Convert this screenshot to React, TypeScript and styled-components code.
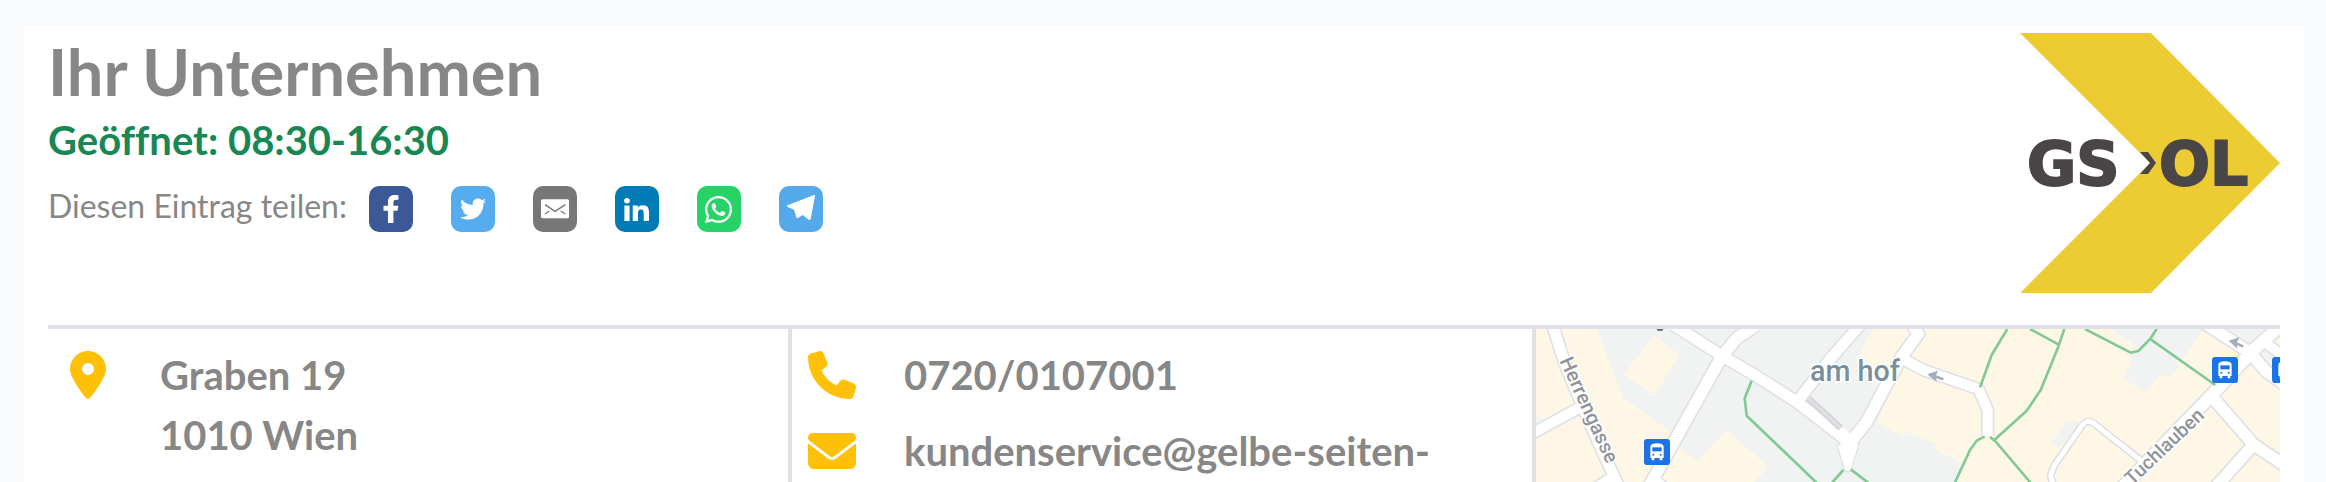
import React from "react";
import styled, { createGlobalStyle } from "styled-components";
import { FaFacebookF, FaTwitter, FaWhatsapp } from "react-icons/fa";
import { FaEnvelope, FaLocationDot, FaPhone } from "react-icons/fa6";

const GlobalStyle = createGlobalStyle`
  *, *::before, *::after { box-sizing: border-box; }
  body {
    margin: 0;
    background: #f8fafc;
    color: #878787;
    font-family: Lato, "Liberation Sans", sans-serif;
    font-variant-ligatures: none;
  }
`;

const Page = styled.div`
  display: flex;
  flex-direction: column;
  min-height: 100vh;
  padding: 25px 22px 0 24px;
`;

const Card = styled.main`
  display: flex;
  flex-direction: column;
  flex: 1;
  padding: 8px 24px 0;
  background: #fff;
`;

const Header = styled.header`
  display: flex;
  justify-content: space-between;
  align-items: flex-start;
  padding-bottom: 32px;
  border-bottom: 4px solid #dee2e6;
`;

const Title = styled.h1`
  margin: 0;
  font-size: 65px;
  line-height: 77px;
  font-weight: 700;
`;

const OpeningHours = styled.p`
  margin: 0;
  color: #198754;
  font-size: 40px;
  line-height: 60px;
  font-weight: 700;
`;

const ShareRow = styled.div`
  display: flex;
  align-items: flex-start;
  gap: 22px;
  margin-top: 12px;
  font-size: 32px;
  line-height: 48px;
`;

const ShareButtons = styled.div`
  display: flex;
  gap: 38px;
  padding-top: 4px;
`;

const ShareButton = styled.button<{ $color: string }>`
  display: flex;
  align-items: center;
  justify-content: center;
  width: 44px;
  height: 46px;
  padding: 0;
  border: 0;
  border-radius: 10px;
  background: ${(p) => p.$color};
  color: #fff;
  cursor: pointer;
`;

const Logo = styled.svg`
  display: block;
  flex: none;
  width: 260px;
  height: 260px;
`;

const Columns = styled.div`
  display: grid;
  grid-template-columns: repeat(3, minmax(0, 1fr));
  flex: 1;
`;

const ContactColumn = styled.section`
  display: flex;
  flex-direction: column;
  gap: 16px;
  padding-top: 16px;
  border-right: 4px solid #dee2e6;
`;

const ContactRow = styled.div`
  display: grid;
  grid-template-columns: 80px minmax(0, 1fr);
  column-gap: 32px;
  font-size: 40px;
  line-height: 60px;
  font-weight: 700;
`;

const IconCell = styled.span`
  display: flex;
  align-items: center;
  justify-content: center;
  height: 60px;
  color: #ffc107;
  font-size: 48px;
`;

const Address = styled.address`
  font-style: normal;
`;

const ContactLink = styled.a`
  color: inherit;
  text-decoration: none;
`;

const MapColumn = styled.section`
  display: flex;
  overflow: hidden;
`;

const MapCanvas = styled.svg`
  display: block;
  width: 100%;
  height: auto;
  align-self: flex-start;
`;

const MailGlyph = () => (
  <svg width="44" height="46" viewBox="0 0 132 138" aria-hidden="true">
    <rect x="24" y="40" width="84" height="57" rx="5" fill="#fff" />
    <path d="M36 56 66 76 97 56M36 84l13-9M97 84l-14-9" fill="none" stroke="#777" strokeWidth="4" />
  </svg>
);

const LinkedInGlyph = () => (
  <svg width="25" height="23" viewBox="20 18 26 26" preserveAspectRatio="none" fill="currentColor" aria-hidden="true">
    <path d="M20.4 44h5.4V26.6h-5.4V44zM23.1 18c-1.7 0-3.1 1.4-3.1 3.1s1.4 3.1 3.1 3.1 3.1-1.4 3.1-3.1S24.8 18 23.1 18zM39.5 26.2c-2.6 0-4.4 1.4-5.1 2.8h-.1v-2.4h-5.2V44h5.4v-8.6c0-2.3.4-4.5 3.2-4.5s2.8 2.6 2.8 4.6V44H46v-9.5c0-4.7-1-8.3-6.5-8.3z" />
  </svg>
);

const TelegramGlyph = () => (
  <svg width="44" height="46" viewBox="0 0 132 138" aria-hidden="true">
    <path
      d="M25 58 105 27Q109 26 108 30L95 99Q93 104 89 101L71 87 57 96Q53 98 52 94L45 71 26 63Q22 60 25 58Z"
      fill="#fff"
    />
  </svg>
);

const shareTargets = [
  { name: "Facebook", color: "#3b5998", icon: <FaFacebookF size={28} /> },
  { name: "Twitter", color: "#55acee", icon: <FaTwitter size={26} /> },
  { name: "E-Mail", color: "#777777", icon: <MailGlyph /> },
  { name: "LinkedIn", color: "#007bb6", icon: <LinkedInGlyph /> },
  { name: "WhatsApp", color: "#25d366", icon: <FaWhatsapp size={31} /> },
  { name: "Telegram", color: "#54a9eb", icon: <TelegramGlyph /> },
];

const CompanyLogo = () => (
  <Logo viewBox="0 0 260 260" role="img" aria-label="GS›OL">
    <path d="M0 0H131L260 130 131 260H0L130 130Z" fill="#edcb33" />
    <path d="M120 119h8l8 11-8 11h-8l10-11Z" fill="#4a4546" />
    <g
      fill="#4a4546"
      stroke="#4a4546"
      strokeWidth="2"
      fontFamily="'DejaVu Sans', sans-serif"
      fontWeight="700"
      fontSize="60"
    >
      <text x="7" y="152">GS</text>
      <text x="139" y="152">OL</text>
    </g>
  </Logo>
);

const roads = [
  { d: "M96 40 136 165 210 340 300 540", w: 32 },
  { d: "M30 374 180 292", w: 30 },
  { d: "M200 550 285 498", w: 30 },
  { d: "M460 44 605 137 700 193 830 275 985 395", w: 32 },
  { d: "M370 560 605 140 650 85 710 45", w: 34 },
  { d: "M395 500 440 540", w: 28 },
  { d: "M832 275 930 148 1020 45", w: 32 },
  { d: "M985 405 1040 335 1145 140 1195 72 1175 40", w: 34 },
  { d: "M1145 145 1210 180 1375 237 1403 300 1403 378", w: 30 },
  { d: "M1790 550 2080 250 2200 120 2290 40", w: 36 },
  { d: "M2055 40 2190 128 2240 185 2300 228", w: 34 },
  { d: "M2225 90 2300 145", w: 28 },
  { d: "M2080 265 2200 403 2300 470", w: 34 },
  { d: "M2200 405 2070 550", w: 34 },
  { d: "M1600 530 1592 495 1604 465 1680 355Q1702 320 1726 344L1880 465", w: 14 },
];

const blocks = [
  "228,50 1060,50 1010,150 1090,240 1075,340 1150,378 1160,365 1248,402 1245,420 1330,460 1300,530 690,530 745,470 620,360 532,452 475,412 445,360 310,265",
  "48,318 95,340 48,350",
  "1760,50 2055,50 1990,145 1970,150 1975,175 1948,203 1920,195 1875,247 1810,205 1852,110",
  "1640,333 1670,333 1685,345 1615,412 1595,400",
  "2120,50 2250,50 2190,112",
  "2225,130 2240,115 2290,150 2290,185",
];

const paths = [
  "M695 212 674 265 680 317 900 528",
  "M970 480 930 525",
  "M992 478 1050 522",
  "M1462 57 1415 135 1380 232",
  "M1530 57 1615 103",
  "M1633 57 1615 110 1562 240 1520 302 1423 390 1540 528",
  "M1410 380 1423 392",
  "M1394 380 1370 392 1350 420 1300 528",
  "M1695 57 1832 128 1855 123 1892 85 1910 57",
  "M1892 88 2086 225",
];

const BusStop = ({ x, y }: { x: number; y: number }) => (
  <g transform={`translate(${x} ${y})`}>
    <rect width="78" height="78" rx="10" fill="#1a73e8" />
    <path d="M19 24q0-11 20-11t20 11v33h-4v7h-8v-7H31v7h-8v-7h-4Z" fill="#fff" />
    <path d="M25 25h28v12H25Z" fill="#1a73e8" />
    <circle cx="28" cy="47" r="3" fill="#1a73e8" />
    <circle cx="50" cy="47" r="3" fill="#1a73e8" />
  </g>
);

const CityMap = () => (
  <MapCanvas viewBox="48 57 2232 459" role="img" aria-label="Stadtplan">
    <rect x="48" y="57" width="2232" height="459" fill="#fff7e6" />
    <g fill="#f1f3f3">
      {blocks.map((points) => (
        <polygon key={points} points={points} />
      ))}
    </g>
    <polygon points="400,75 480,135 403,256 310,195" fill="#fff7e6" />
    <g fill="none" stroke="#dfe1e6" strokeLinejoin="round">
      {roads.map((r) => (
        <path key={r.d} d={r.d} strokeWidth={r.w + 10} />
      ))}
    </g>
    <path d="M950 405 975 484H992L1018 400Z" fill="#fff" stroke="#dfe1e6" strokeWidth="4" />
    <g fill="none" stroke="#fff" strokeLinejoin="round">
      {roads.map((r) => (
        <path key={r.d} d={r.d} strokeWidth={r.w} />
      ))}
    </g>
    <path d="M960 400 979 478H989L1010 400Z" fill="#fff" />
    <path d="M866 266 962 354" stroke="#d5d7da" strokeWidth="20" />
    <path d="M866 266 962 354" stroke="#e6e7e9" strokeWidth="5" />
    <path d="M960 358 995 385" stroke="#fff" strokeWidth="18" />
    <g fill="none" stroke="#81c995" strokeWidth="8" strokeLinejoin="round">
      {paths.map((d) => (
        <path key={d} d={d} />
      ))}
    </g>
    <g stroke="#a5acbb" strokeWidth="8">
      <path d="M1270 208 1240 197" />
      <path d="M2170 110 2143 97" />
    </g>
    <g fill="#a5acbb">
      <path d="M1222 193 1254 182 1248 196 1250 216Z" />
      <path d="M2126 92 2158 82 2151 96 2152 116Z" />
    </g>
    <ellipse cx="420" cy="57" rx="10" ry="6" fill="#6b7075" />
    <BusStop x={372} y={387} />
    <BusStop x={2076} y={141} />
    <BusStop x={2256} y={141} />
    <g fontFamily="Roboto, sans-serif" fontWeight="500" stroke="#fff" strokeWidth="10" strokeLinejoin="round" paintOrder="stroke">
      <text x="870" y="212" fontSize="86" fill="#78909c">
        am hof
      </text>
      <text transform="translate(118 152) rotate(65.5)" fontSize="60" fill="#8f9499">
        Herrengasse
      </text>
      <text transform="translate(2056 320) rotate(-43.5)" textAnchor="end" fontSize="58" fill="#8f9499">
        Tuchlauben
      </text>
    </g>
  </MapCanvas>
);

export default function App() {
  return (
    <Page>
      <GlobalStyle />
      <Card>
        <Header>
          <div>
            <Title>Ihr Unternehmen</Title>
            <OpeningHours>Geöffnet: 08:30-16:30</OpeningHours>
            <ShareRow>
              <span>Diesen Eintrag teilen:</span>
              <ShareButtons>
                {shareTargets.map((t) => (
                  <ShareButton key={t.name} type="button" aria-label={t.name} $color={t.color}>
                    {t.icon}
                  </ShareButton>
                ))}
              </ShareButtons>
            </ShareRow>
          </div>
          <CompanyLogo />
        </Header>
        <Columns>
          <ContactColumn>
            <ContactRow>
              <IconCell>
                <FaLocationDot />
              </IconCell>
              <Address>
                Graben 19
                <br />
                1010 Wien
              </Address>
            </ContactRow>
          </ContactColumn>
          <ContactColumn>
            <ContactRow>
              <IconCell>
                <FaPhone />
              </IconCell>
              <ContactLink href="tel:07200107001">0720/0107001</ContactLink>
            </ContactRow>
            <ContactRow>
              <IconCell>
                <FaEnvelope />
              </IconCell>
              <ContactLink href="#kontakt">kundenservice@gelbe-seiten-</ContactLink>
            </ContactRow>
          </ContactColumn>
          <MapColumn>
            <CityMap />
          </MapColumn>
        </Columns>
      </Card>
    </Page>
  );
}
